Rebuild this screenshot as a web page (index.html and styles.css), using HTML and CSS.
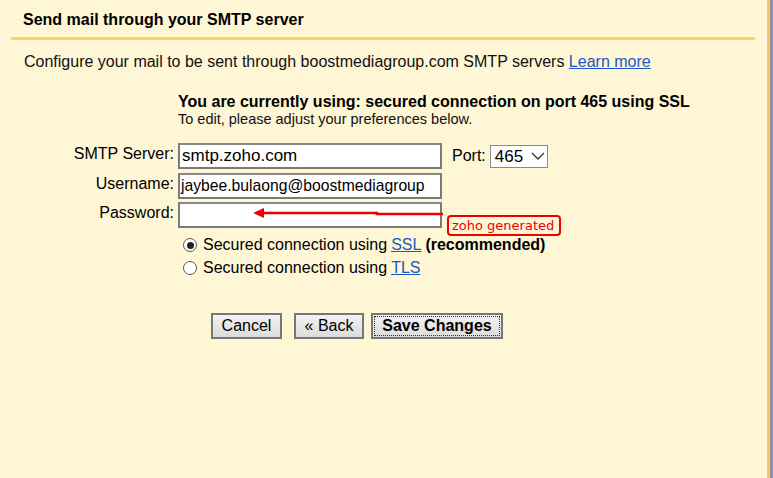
FILE: index.html
```html
<!DOCTYPE html>
<html>
<head>
<meta charset="utf-8">
<link rel="stylesheet" href="styles.css">
</head>
<body>
<div class="frame">
  <div class="panel">
    <div class="header"><span class="title">Send mail through your SMTP server</span></div>
    <div class="intro">Configure your mail to be sent through boostmediagroup.com SMTP servers <a class="link" href="#">Learn more</a></div>
    <div class="status">
      <div class="status-main">You are currently using: secured connection on port 465 using SSL</div>
      <div class="status-sub">To edit, please adjust your preferences below.</div>
    </div>
    <div class="form">
      <div class="row">
        <label class="lbl">SMTP Server:</label>
        <div class="field">smtp.zoho.com</div>
        <span class="port-lbl">Port:</span>
        <div class="select">465<svg class="chev" width="14" height="9" viewBox="0 0 14 9"><path d="M1 1 L7 7 L13 1" fill="none" stroke="#333" stroke-width="1.3"/></svg></div>
      </div>
      <div class="row">
        <label class="lbl">Username:</label>
        <div class="field user">jaybee.bulaong@boostmediagroup</div>
      </div>
      <div class="row">
        <label class="lbl">Password:</label>
        <div class="field pw"></div>
        <svg class="arrow" width="200" height="14" viewBox="0 0 200 14"><path d="M8 7 L124 7 L124 8 L190 8" fill="none" stroke="#f20000" stroke-width="2.5"/><path d="M0 7 L11 2 L11 12 Z" fill="#f20000"/></svg>
        <span class="note">zoho generated</span>
      </div>
      <div class="radios">
        <div class="radio-row"><span class="radio on"></span>Secured connection using <a class="link" href="#">SSL</a> <b>(recommended)</b></div>
        <div class="radio-row"><span class="radio"></span>Secured connection using <a class="link" href="#">TLS</a></div>
      </div>
      <div class="buttons">
        <button class="btn cancel">Cancel</button>
        <button class="btn back">« Back</button>
        <button class="btn save">Save Changes</button>
      </div>
    </div>
  </div>
  <div class="edge"></div>
</div>
</body>
</html>
```
FILE: styles.css
```css
html, body { margin: 0; padding: 0; }
body {
  width: 773px; height: 478px; overflow: hidden;
  font-family: "Liberation Sans", Arial, sans-serif;
  color: #000;
  background: #fff6d6;
}
.frame { display: flex; height: 478px; }
.panel { width: 767px; background: #fff6d6; }
.edge {
  width: 3px; background: #f8c65a;
  border-right: 3px solid #8b93a8;
}
.header {
  margin-left: 11px; width: 744px;
  height: 40px; box-sizing: border-box;
  padding: 11px 0 0 12px;
  border-bottom: 3px solid #fbd264;
  line-height: 18px;
}
.title { font-size: 16px; font-weight: bold; }
.intro { padding: 13px 0 0 24px; font-size: 16px; line-height: 18px; color: #111; }
.link { color: #1a56c8; text-decoration: underline; }
.status { padding: 22px 0 0 178px; }
.status-main { font-size: 16px; font-weight: bold; line-height: 18px; }
.status-sub { font-size: 14.5px; line-height: 17px; color: #111; }
.form { padding-top: 15px; }
.row { display: flex; align-items: flex-start; height: 29.5px; position: relative; }
.lbl { width: 174px; text-align: right; font-size: 16px; padding-top: 2px; box-sizing: border-box; }
.field {
  margin-left: 4px; width: 264px; height: 26px; box-sizing: border-box;
  border: 2px solid #7a7a7a; border-top-color: #8a8a8a; background: #fff;
  font-size: 17px; line-height: 20px; padding: 1px 0 0 2px; white-space: nowrap; overflow: hidden;
}
.field.user { font-size: 15.7px; padding-left: 1px; }
.port-lbl { margin-left: 10px; font-size: 16px; padding-top: 4px; }
.select {
  margin-left: 4px; margin-top: 2px; width: 58px; height: 23px; box-sizing: border-box;
  border: 1px solid #8a8a8a; background: #fff; font-size: 17px; line-height: 19px; padding: 1px 0 0 4px;
  display: flex; align-items: flex-start; gap: 8px;
}
.chev { margin-top: 5px; }
.arrow { position: absolute; left: 253px; top: 4px; }
.note {
  position: absolute; left: 447px; top: 13px;
  border: 2px solid #f20000; border-radius: 4px;
  color: #f20000; font-family: "DejaVu Sans", sans-serif; font-size: 13px;
  padding: 1px 5px 1px 3px; background: #fff6d6; line-height: 15px;
}
.radios { padding: 2px 0 0 183px; }
.radio-row { display: flex; align-items: center; font-size: 16px; height: 23px; }
.radio-row .link { margin-left: 4px; }
.radio-row b { margin-left: 4px; }
.radio {
  width: 14px; height: 14px; border: 1px solid #555; border-radius: 50%;
  background: #fff; margin-right: 6px; box-sizing: border-box; position: relative;
}
.radio.on::after {
  content: ""; position: absolute; left: 2.5px; top: 2.5px; width: 7px; height: 7px;
  border-radius: 50%; background: #222;
}
.buttons { display: flex; padding: 33.5px 0 0 211px; }
.btn {
  font-family: "Liberation Sans", Arial, sans-serif; font-size: 16px; color: #000;
  height: 26px; box-sizing: border-box; padding: 0;
  border: 2px solid #777; background: linear-gradient(#f2f2f2, #dcdcdc);
}
.btn.cancel { width: 71px; margin-right: 12px; }
.btn.back { width: 70px; margin-right: 7px; }
.btn.save { width: 132px; font-weight: bold; outline: 1px dotted #333; outline-offset: -4px; }
```
